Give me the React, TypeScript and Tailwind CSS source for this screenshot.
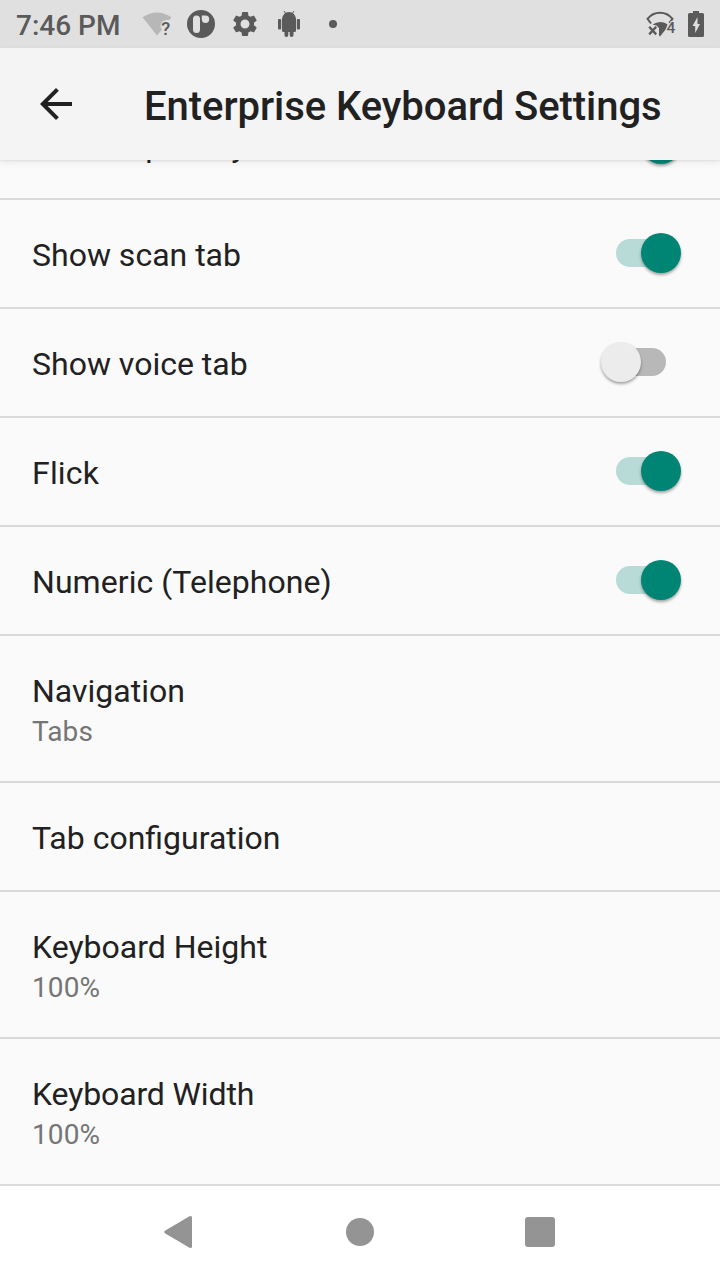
import React from "react";

type Item = { title: string; detail?: string; on?: boolean; spacing?: string };

const items: Item[] = [
  { title: "Show scan tab", on: true },
  { title: "Show voice tab", on: false },
  { title: "Flick", on: true, spacing: "tracking-[0.2px]" },
  { title: "Numeric (Telephone)", on: true, spacing: "tracking-[0.06px]" },
  { title: "Navigation", detail: "Tabs" },
  { title: "Tab configuration" },
  { title: "Keyboard Height", detail: "100%" },
  { title: "Keyboard Width", detail: "100%", spacing: "tracking-[-0.13px]" },
];

function Toggle({ on }: { on: boolean }) {
  return on ? (
    <span className="flex h-7 w-[65px] items-center justify-end rounded-full bg-linear-to-r from-[#b8dbd7] from-80% to-transparent to-80%">
      <span className="size-10 rounded-full bg-[#008575] shadow-[0_2px_3px_rgba(0,0,0,0.35)]" />
    </span>
  ) : (
    <span className="mr-[15px] flex h-7 w-[65px] items-center rounded-full bg-linear-to-r from-transparent from-30% to-[#b8b8b8] to-30%">
      <span className="size-10 rounded-full bg-[#ececec] shadow-[0_2px_3px_rgba(0,0,0,0.35)]" />
    </span>
  );
}

function Row({ title, detail, on, spacing = "" }: Item) {
  return (
    <div
      className={`flex shrink-0 justify-between border-b-2 border-[#dadadd] pr-[39px] pl-8 ${detail ? "h-[147px]" : "h-[109px]"}`}
    >
      <div className="pt-[36px]">
        <div className={`text-[32px] leading-[38px] text-[#212121] ${spacing}`}>{title}</div>
        {detail && <div className="mt-[5px] text-[28px] leading-[33px] tracking-[0.1px] text-[#757575]">{detail}</div>}
      </div>
      {on !== undefined && (
        <div className="flex h-[106px] items-center">
          <Toggle on={on} />
        </div>
      )}
    </div>
  );
}

function StatusBar() {
  return (
    <div className="flex h-12 shrink-0 items-center bg-[#e0e0e0] pr-4 pl-4 text-[#5a5a5a]">
      <span className="w-[126px] pt-[3px] text-[28px] leading-8 font-medium">7:46 PM</span>
      <svg className="h-12 w-[200px]" viewBox="142 0 200 48" fill="currentColor">
        <path d="M142.500 17.300Q157 7.500 171.500 17.300L169.800 19.800Q160 19.500 160.500 27L162 29.500L157 35.500Z" fill="#b7b7b7" />
        <text x="161.300" y="35" fontSize="18.500" fontWeight="500" className="font-[Roboto]">?</text>
        <path
          fillRule="evenodd"
          d="M201 10a14 14 0 1 0 0 28a14 14 0 1 0 0-28ZM196.500 15.500a3.500 3.500 0 0 1 3.500 3.500v10.500a3.500 3.500 0 0 1-7 0v-10.500a3.500 3.500 0 0 1 3.500-3.500ZM205.500 15.500a3.700 3.700 0 1 1 0 7.400a3.700 3.700 0 0 1-3.700-3.700v-3.700Z"
        />
        <path
          transform="translate(230 9) scale(1.25)"
          d="M19.140 12.940c.04-.3.06-.61.06-.94 0-.32-.02-.64-.07-.94l2.030-1.580a.49.49 0 0 0 .12-.61l-1.920-3.320a.488.488 0 0 0-.59-.22l-2.390.96c-.5-.38-1.030-.7-1.620-.94l-.36-2.540a.484.484 0 0 0-.48-.41h-3.840c-.24 0-.43.17-.47.41l-.36 2.540c-.59.24-1.130.57-1.620.94l-2.390-.96c-.22-.08-.47 0-.59.22L2.740 8.870c-.12.21-.08.47.12.61l2.030 1.580c-.05.3-.09.63-.09.94s.02.64.07.94l-2.030 1.580a.49.49 0 0 0-.12.61l1.920 3.320c.12.22.37.29.59.22l2.390-.96c.5.38 1.030.7 1.620.94l.36 2.540c.05.24.24.41.48.41h3.840c.24 0 .44-.17.47-.41l.36-2.540c.59-.24 1.130-.56 1.620-.94l2.390.96c.22.08.47 0 .59-.22l1.920-3.320c.12-.22.07-.47-.12-.61l-2.010-1.580zM12 15.600c-1.980 0-3.600-1.620-3.600-3.600s1.620-3.600 3.600-3.600 3.600 1.620 3.600 3.600-1.620 3.600-3.600 3.600z"
        />
        <path d="M282 19h14v11.500a1.500 1.500 0 0 1-1.500 1.500H293.500v3a1.900 1.900 0 0 1-3.800 0v-3h-1.400v3a1.900 1.900 0 0 1-3.800 0v-3h-1a1.500 1.500 0 0 1-1.500-1.500Z" />
        <path d="M282 20c0-4.500 3-8 7-8s7 3.500 7 8Z" />
        <path d="M284 11l2 3M294 11l-2 3" stroke="currentColor" strokeWidth="1" />
        <rect x="278" y="19" width="3.200" height="10.500" rx="1" />
        <rect x="296.800" y="19" width="3.200" height="10.500" rx="1" />
        <circle cx="333" cy="24" r="4" />
      </svg>
      <svg className="ml-auto h-12 w-[60px]" viewBox="644 0 60 48" fill="currentColor">
        <path d="M651 23.500L647.500 18.800C654 10.700 666 10.700 672.500 18.800L669.300 23.200" fill="none" stroke="currentColor" strokeWidth="2" />
        <path d="M652.500 24.500Q660 19.500 667.500 24.200L666 29L660 36.500L659 35.500V28L656.500 25.500Z" />
        <path d="M649.200 26.800l7 7.600M656.200 26.800l-7 7.600" stroke="currentColor" strokeWidth="2.300" fill="none" />
        <text x="666.500" y="33.300" fontSize="15.500" fontWeight="500" stroke="#e0e0e0" strokeWidth="2" paintOrder="stroke" className="font-[Roboto]">4</text>
        <path fillRule="evenodd" d="M693 11h6v2h3.500a1.500 1.500 0 0 1 1.500 1.500v21a1.500 1.500 0 0 1-1.500 1.500h-13a1.500 1.500 0 0 1-1.500-1.500v-21a1.500 1.500 0 0 1 1.500-1.500h3.500ZM697.500 17L692.500 26h2.700v7l4.800-9h-2.500Z" />
      </svg>
    </div>
  );
}

export default function App() {
  return (
    <div className="flex h-[1280px] w-[720px] flex-col overflow-hidden bg-[#fafafa] font-[Roboto,sans-serif]">
      <StatusBar />
      <header className="z-10 flex h-28 shrink-0 items-center bg-[#f4f4f4] pl-8 text-[#212121] shadow-[0_1px_2px_rgba(0,0,0,0.08),0_3px_8px_rgba(0,0,0,0.06)]">
        <svg className="size-12 shrink-0" viewBox="0 0 24 24" fill="currentColor">
          <path d="M20 11H7.830l5.590-5.590L12 4l-8 8 8 8 1.410-1.410L7.830 13H20v-2z" />
        </svg>
        <h1 className="ml-16 pt-1 text-[40px] leading-[47px] font-medium tracking-[-0.05px] whitespace-nowrap">Enterprise Keyboard Settings</h1>
      </header>
      <main className="flex h-[1026px] shrink-0 flex-col justify-end overflow-hidden">
        <Row title="Default privacy" on={true} spacing="[word-spacing:3px]" />
        {items.map((item) => (
          <Row key={item.title} {...item} />
        ))}
      </main>
      <nav className="flex h-[94px] shrink-0 items-center justify-center gap-[132px] bg-white pb-[2px] text-[#949494]">
        <svg className="size-12" viewBox="0 0 48 48" fill="currentColor">
          <path d="M8.900 22.700L33.500 8.300Q36 7.300 36 9.500V38.500Q36 40.700 33.500 39.700L8.900 25.300Q7.300 24 8.900 22.700Z" />
        </svg>
        <svg className="size-12" viewBox="0 0 48 48" fill="currentColor">
          <circle cx="24" cy="24" r="14" />
        </svg>
        <svg className="size-12" viewBox="0 0 48 48" fill="currentColor">
          <rect x="9" y="9" width="30" height="30" rx="3" />
        </svg>
      </nav>
    </div>
  );
}
